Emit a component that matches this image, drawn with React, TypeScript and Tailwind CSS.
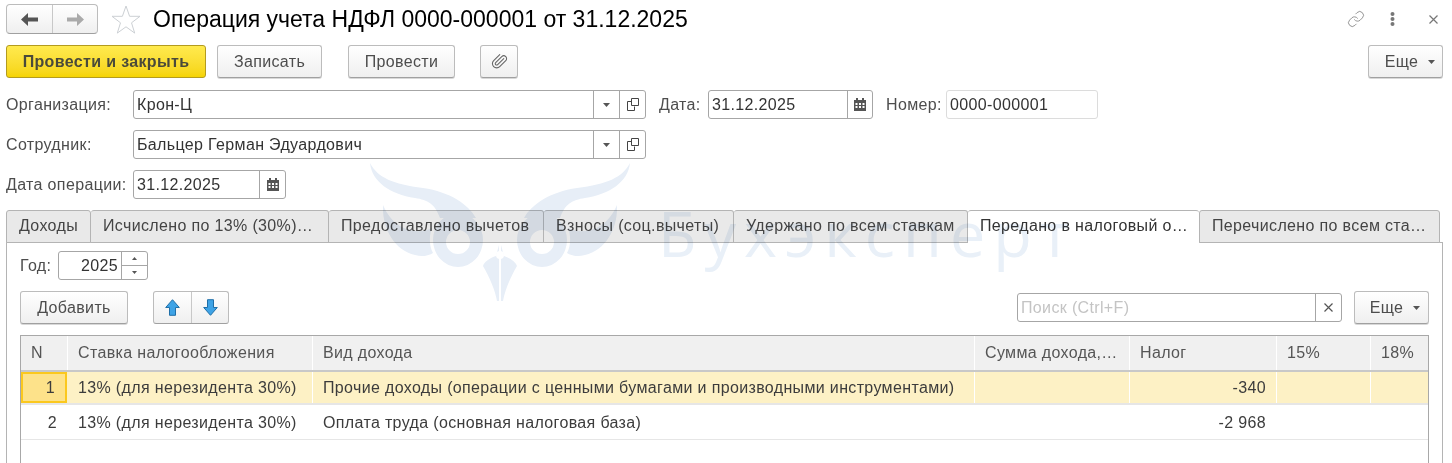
import React from "react"
import { Link, Paperclip } from "lucide-react"

const Caret = ({ className = "" }: { className?: string }) => (
  <svg width="7" height="4" viewBox="0 0 7 4" className={`shrink-0 ${className}`}>
    <path d="M0 0h7L3.5 4z" fill="#555" />
  </svg>
)

const OpenIcon = () => (
  <svg width="12" height="13" viewBox="0 0 12 13" fill="none" stroke="#444" strokeWidth="1">
    <path d="M4.5 .5h7v7h-7z" />
    <path d="M4.5 3.5h-4v9h7v-4" />
  </svg>
)

const CalendarIcon = () => (
  <svg width="12" height="13" viewBox="0 0 12 13">
    <path d="M0 2h12v11H0z" fill="#555" />
    <path d="M2 0h2v3H2zM8 0h2v3H8z" fill="#555" />
    <path d="M1.500 5h2v2h-2zM5 5h2v2H5zM8.500 5h2v2h-2zM1.500 8h2v2h-2zM5 8h2v2H5zM8.500 8h2v2h-2z" fill="#fff" />
  </svg>
)

const Btn = ({ className = "", children }: { className?: string; children: React.ReactNode }) => (
  <div
    className={`flex h-[33px] items-center justify-center rounded-[3px] border border-[#bcbcbc] border-b-[#a0a0a0] bg-gradient-to-b from-white to-[#efefef] text-[#4d4d4d] shadow-[0_1px_0_#d8d8d8] ${className}`}>
    {children}
  </div>
)

const Field = ({ className = "", text, light = false, children }: { className?: string; text: string; light?: boolean; children?: React.ReactNode }) => (
  <div
    className={`flex h-[29px] items-stretch rounded-[3px] border bg-white ${light ? "border-[#dcdcdc]" : "border-[#a6a6a6]"} ${className}`}>
    <div className="min-w-0 flex-1 truncate pl-[3px] leading-[27px] text-[#333]">{text}</div>
    {children}
  </div>
)

const Cell = ({ w, className = "", children }: { w: string; className?: string; children?: React.ReactNode }) => (
  <div className={`shrink-0 truncate border-r border-white px-[10px] last:border-r-0 ${w} ${className}`}>{children}</div>
)

const tabs = [
  ["Доходы", "w-[85px]"],
  ["Исчислено по 13% (30%)…", "w-[238px]"],
  ["Предоставлено вычетов", "w-[215px]"],
  ["Взносы (соц.вычеты)", "w-[190px]"],
  ["Удержано по всем ставкам", "w-[234px]"]
]

const Watermark = () => (
  <div className="pointer-events-none absolute inset-0 mix-blend-multiply">
    <svg width="290" height="155" viewBox="360 155 290 155" className="absolute left-[360px] top-[155px]">
      <g fill="#e7eef7">
        {[0, 1].map((i) => (
          <g key={i} transform={i ? "translate(1000 0) scale(-1 1)" : undefined}>
            <path d="M630 163C628 182 610 194 585 198C572 200 565 204 560 218L524 218C532 204 550 192 577 188C607 184 622 178 630 163Z" />
            <path
              fillRule="evenodd"
              d="M517 240a25 27 0 1 0 50 0a25 27 0 1 0-50 0ZM530 242a12 12 0 1 1 24 0a12 12 0 1 1-24 0Z"
            />
            <path d="M617 205C618 228 606 250 585 255C578 257 572 256 567 253C571 246 571 235 568 228C578 233 590 232 600 226C608 221 613 214 617 205Z" />
            <path d="M501 245L504 256C510 258 516 262 517 266C510 278 505 290 503 301H501Z" />
          </g>
        ))}
        <circle cx="500" cy="255" r="4" fill="#fff" />
      </g>
    </svg>
    <div className="absolute left-[658px] top-[193px] font-['Open_Sans',sans-serif] text-[63px] leading-[80px] tracking-[8px] text-[#e9f0f8]">
      Бухэксперт
    </div>
  </div>
)

export default function App() {
  return (
    <div className="relative h-[463px] w-[1452px] overflow-hidden bg-white pt-[4px] font-['Liberation_Sans',Arial,sans-serif] text-[16px] tracking-[0.35px] text-[#4d4d4d]">
      {/* шапка */}
      <div className="flex h-[30px] items-center pl-[6px] pr-[14px]">
        <div className="flex h-[30px] w-[92px] rounded-[4px] border border-[#bcbcbc] border-b-[#a0a0a0] bg-gradient-to-b from-white to-[#efefef]">
          <div className="flex w-[46px] items-center justify-center border-r border-[#c8c8c8]">
            <svg width="17" height="13" viewBox="0 0 17 13">
              <path d="M0 6.500L7 0v4.500h10v4H7V13z" fill="#555" />
            </svg>
          </div>
          <div className="flex flex-1 items-center justify-center">
            <svg width="17" height="13" viewBox="0 0 17 13">
              <path d="M17 6.500L10 0v4.500H0v4h10V13z" fill="#aaa" />
            </svg>
          </div>
        </div>
        <svg width="30" height="29" viewBox="0 0 30 29" className="ml-[13px]">
          <path d="M15 1l3.600 10.300h10.400l-8.500 6.500 3.200 10.300-8.700-6.300-8.700 6.300 3.200-10.300L1 11.300h10.400z" fill="none" stroke="#ccd0d4" strokeWidth="1" />
        </svg>
        <div className="ml-[12px] text-[23px] leading-[30px] tracking-normal text-black">Операция учета НДФЛ 0000-000001 от 31.12.2025</div>
        <div className="ml-auto flex items-center">
          <Link size={18} strokeWidth={1.2} color="#8a8a8a" />
          <svg width="5" height="14" viewBox="0 0 5 14" className="ml-[25px]">
            <g fill="#777">
              <circle cx="2.500" cy="2" r="2" />
              <circle cx="2.500" cy="7" r="2" />
              <circle cx="2.500" cy="12" r="2" />
            </g>
          </svg>
          <svg width="9" height="9" viewBox="0 0 9 9" className="ml-[34px]">
            <path d="M.5.5l8 8M8.500.5l-8 8" stroke="#777" strokeWidth="1.200" />
          </svg>
        </div>
      </div>

      {/* командная панель */}
      <div className="mt-[11px] flex items-center pl-[6px] pr-[9px]">
        <div className="flex h-[33px] w-[200px] items-center justify-center rounded-[3px] border border-[#b39b1f] bg-gradient-to-b from-[#ffea4d] to-[#f6d400] font-bold text-[#4a4a3a]">
          Провести и закрыть
        </div>
        <Btn className="ml-[11px] w-[105px]">Записать</Btn>
        <Btn className="ml-[26px] w-[107px]">Провести</Btn>
        <Btn className="ml-[25px] w-[38px]">
          <Paperclip size={17} strokeWidth={1.5} color="#666" className="-scale-x-100 rotate-90" />
        </Btn>
        <Btn className="ml-auto w-[75px] gap-[10px] pl-[9px]">
          Еще
          <Caret />
        </Btn>
      </div>

      {/* реквизиты */}
      <div className="mt-[12px] flex items-center pl-[6px]">
        <div className="w-[127px] pt-px">Организация:</div>
        <Field className="w-[513px]" text="Крон-Ц">
          <div className="flex w-[26px] items-center justify-center border-l border-[#a6a6a6]">
            <Caret />
          </div>
          <div className="flex w-[26px] items-center justify-center border-l border-[#a6a6a6]">
            <OpenIcon />
          </div>
        </Field>
        <div className="ml-[13px] w-[49px] pt-px">Дата:</div>
        <Field className="w-[165px]" text="31.12.2025">
          <div className="flex w-[25px] items-center justify-center border-l border-[#a6a6a6]">
            <CalendarIcon />
          </div>
        </Field>
        <div className="ml-[13px] w-[60px] pt-px">Номер:</div>
        <Field className="w-[152px]" text="0000-000001" light />
      </div>
      <div className="mt-[11px] flex items-center pl-[6px]">
        <div className="w-[127px] pt-px">Сотрудник:</div>
        <Field className="w-[513px]" text="Бальцер Герман Эдуардович">
          <div className="flex w-[26px] items-center justify-center border-l border-[#a6a6a6]">
            <Caret />
          </div>
          <div className="flex w-[26px] items-center justify-center border-l border-[#a6a6a6]">
            <OpenIcon />
          </div>
        </Field>
      </div>
      <div className="mt-[11px] flex items-center pl-[6px]">
        <div className="w-[127px] pt-px">Дата операции:</div>
        <Field className="w-[153px]" text="31.12.2025">
          <div className="flex w-[26px] items-center justify-center border-l border-[#a6a6a6]">
            <CalendarIcon />
          </div>
        </Field>
      </div>

      {/* вкладки */}
      <div className="relative mt-[11px] flex h-[33px] pl-[6px]">
        {tabs.map(([title, w]) => (
          <div
            key={title}
            className={`h-[33px] truncate rounded-t-[3px] border border-l-0 border-[#b4b4b4] bg-[#e9e9e9] pl-[12px] leading-[30px] text-[#444] first:border-l ${w}`}>
            {title}
          </div>
        ))}
        <div className="h-[33px] w-[231px] truncate rounded-t-[3px] border-t border-[#b4b4b4] bg-white pl-[12px] leading-[30px] text-[#333]">
          Передано в налоговый о…
        </div>
        <div className="h-[33px] w-[241px] truncate rounded-t-[3px] border border-[#b4b4b4] bg-[#e9e9e9] pl-[12px] leading-[30px] text-[#444]">
          Перечислено по всем ста…
        </div>
      </div>

      <div className="ml-[6px] mt-[-1px] h-[300px] w-[1437px] border border-[#b4b4b4] pl-[13px] pr-[13px] pt-[8px]">
        <div className="flex items-center">
          <div className="w-[38px] pt-px">Год:</div>
          <div className="flex h-[29px] w-[90px] rounded-[3px] border border-[#a6a6a6]">
            <div className="flex-1 pr-[3px] text-right leading-[27px] text-[#333]">2025</div>
            <div className="flex w-[26px] flex-col border-l border-[#a6a6a6]">
              <div className="flex flex-1 items-center justify-center border-b border-[#a6a6a6]">
                <Caret className="h-[3px] w-[5px] rotate-180" />
              </div>
              <div className="flex flex-1 items-center justify-center">
                <Caret className="h-[3px] w-[5px]" />
              </div>
            </div>
          </div>
        </div>

        <div className="mt-[11px] flex items-center">
          <Btn className="w-[108px]">Добавить</Btn>
          <div className="ml-[25px] flex h-[33px] w-[76px] rounded-[3px] border border-[#bcbcbc] border-b-[#a0a0a0] bg-gradient-to-b from-white to-[#efefef]">
            <div className="flex w-[38px] items-center justify-center border-r border-[#c8c8c8]">
              <svg width="15" height="17" viewBox="0 0 15 17">
                <path d="M7.500 .7L14.300 8.500H10.500V16.300H4.500V8.500H.7Z" fill="#3ea3e6" stroke="#1f6fa8" />
              </svg>
            </div>
            <div className="flex flex-1 items-center justify-center">
              <svg width="15" height="17" viewBox="0 0 15 17">
                <path d="M7.500 16.300L14.300 8.500H10.500V.7H4.500V8.500H.7Z" fill="#3ea3e6" stroke="#1f6fa8" />
              </svg>
            </div>
          </div>
          <div className="ml-auto flex h-[29px] w-[325px] rounded-[3px] border border-[#a6a6a6] bg-white">
            <div className="flex-1 pl-[3px] leading-[27px] text-[#c4c4c4]">Поиск (Ctrl+F)</div>
            <div className="flex w-[26px] items-center justify-center border-l border-[#a6a6a6]">
              <svg width="9" height="9" viewBox="0 0 9 9">
                <path d="M.5.5l8 8M8.500.5l-8 8" stroke="#555" strokeWidth="1.200" />
              </svg>
            </div>
          </div>
          <Btn className="ml-[12px] w-[75px] gap-[10px] pl-[7px]">
            Еще
            <Caret />
          </Btn>
        </div>

        {/* таблица */}
        <div className="mt-[11px] h-[200px] w-[1409px] border border-[#a8a8a8]">
          <div className="flex h-[36px] items-stretch border-b-2 border-[#c8c8c8] bg-[#f0f0f0] leading-[33px] text-[#555]">
            <Cell w="w-[47px]">N</Cell>
            <Cell w="w-[245px]">Ставка налогообложения</Cell>
            <Cell w="w-[662px]">Вид дохода</Cell>
            <Cell w="w-[155px]">Сумма дохода,…</Cell>
            <Cell w="w-[147px]">Налог</Cell>
            <Cell w="w-[94px]">15%</Cell>
            <Cell w="w-[58px]">18%</Cell>
          </div>
          <div className="flex h-[33px] border-b-2 border-[#e6e6e6] bg-[#fdf1c5] leading-[32px] text-[#3c3c3c]">
            <div className="mr-px w-[46px] shrink-0 border-2 border-[#fbc81e] bg-[#fde28a] pr-[10px] text-right leading-[28px]">1</div>
            <Cell w="w-[245px]">13% (для нерезидента 30%)</Cell>
            <Cell w="w-[662px]">Прочие доходы (операции с ценными бумагами и производными инструментами)</Cell>
            <Cell w="w-[155px]" />
            <Cell w="w-[147px]" className="text-right">-340</Cell>
            <Cell w="w-[94px]" />
            <Cell w="w-[58px]" />
          </div>
          <div className="flex h-[35px] border-b border-[#e6e6e6] leading-[36px] text-[#3c3c3c]">
            <Cell w="w-[47px]" className="text-right">2</Cell>
            <Cell w="w-[245px]">13% (для нерезидента 30%)</Cell>
            <Cell w="w-[662px]">Оплата труда (основная налоговая база)</Cell>
            <Cell w="w-[155px]" />
            <Cell w="w-[147px]" className="text-right">-2 968</Cell>
            <Cell w="w-[94px]" />
            <Cell w="w-[58px]" />
          </div>
        </div>
      </div>

      <Watermark />
    </div>
  )
}
